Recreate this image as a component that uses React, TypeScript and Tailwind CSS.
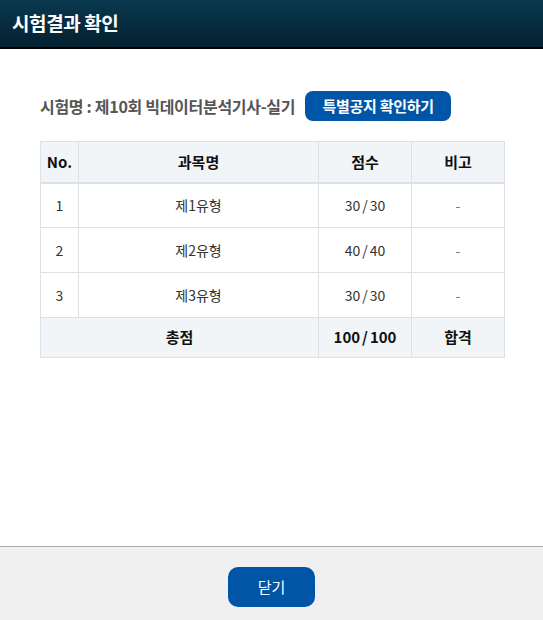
const font = { fontFamily: '"Noto Sans CJK KR", "Noto Sans", sans-serif' };

const rows = [
  { no: '1', name: '제1유형', got: '30', max: '30', note: '-' },
  { no: '2', name: '제2유형', got: '40', max: '40', note: '-' },
  { no: '3', name: '제3유형', got: '30', max: '30', note: '-' },
];

function Score({ got, max }: { got: string; max: string }) {
  return (
    <span>
      {got}
      <span className="mx-[2px]">/</span>
      {max}
    </span>
  );
}

export default function App() {
  return (
    <div className="flex h-[620px] w-[543px] flex-col bg-white" style={font}>
      {/* Title bar */}
      <div className="flex h-[49px] items-center border-b-2 border-black bg-gradient-to-b from-[#0a3950] to-[#04202f] px-3">
        <h1 className="text-[19px] font-bold tracking-[-0.4px] text-white">시험결과 확인</h1>
      </div>

      {/* Body */}
      <div className="flex-1 px-10 pt-[42px]">
        <div className="flex items-center gap-[10px]">
          <p className="text-[16px] font-bold tracking-[-0.3px] text-[#555]">
            시험명 : 제10회 빅데이터분석기사-실기
          </p>
          <button className="h-[30px] w-[146px] rounded-lg bg-[#0055a6] text-[15px] font-bold tracking-[-0.3px] text-white">
            특별공지 확인하기
          </button>
        </div>

        <table className="mt-[20px] w-[465px] border-collapse text-[14px] text-[#333]">
          <thead>
            <tr className="h-[41px] border-b-2 border-[#dde1e6] bg-[#f2f5f7] text-[15px] font-bold text-[#111]">
              <th className="w-[38px] border border-[#dde1e6]">No.</th>
              <th className="w-[240px] border border-[#dde1e6]">과목명</th>
              <th className="w-[93px] border border-[#dde1e6]">점수</th>
              <th className="border border-[#dde1e6]">비고</th>
            </tr>
          </thead>
          <tbody>
            {rows.map((r) => (
              <tr key={r.no} className="h-[45px] text-center">
                <td className="border border-[#dde1e6]">{r.no}</td>
                <td className="border border-[#dde1e6]">{r.name}</td>
                <td className="border border-[#dde1e6]">
                  <Score got={r.got} max={r.max} />
                </td>
                <td className="border border-[#dde1e6] text-[#777]">{r.note}</td>
              </tr>
            ))}
            <tr className="h-[40px] bg-[#f2f5f7] text-center text-[15px] font-bold text-[#111]">
              <td colSpan={2} className="border border-[#dde1e6]">총점</td>
              <td className="border border-[#dde1e6]">
                <Score got="100" max="100" />
              </td>
              <td className="border border-[#dde1e6]">합격</td>
            </tr>
          </tbody>
        </table>
      </div>

      {/* Footer */}
      <div className="flex h-[74px] items-start justify-center border-t border-[#aaa] bg-[#f0f0f0] pt-[20px]">
        <button className="h-[40px] w-[87px] rounded-[10px] bg-[#0055a6] text-[15px] text-white">닫기</button>
      </div>
    </div>
  );
}
